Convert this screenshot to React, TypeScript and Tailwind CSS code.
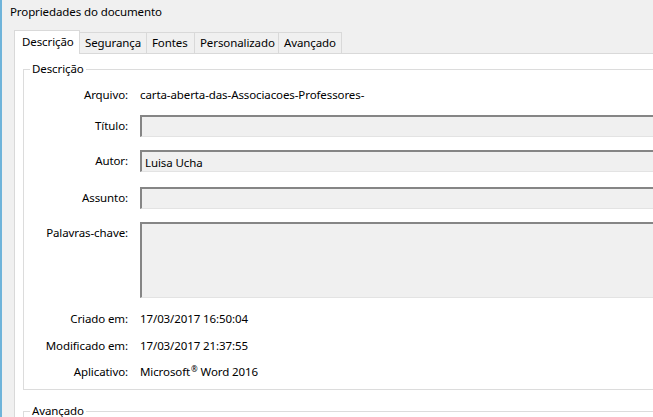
import React from 'react';

const tabs = [
  { label: 'Descrição', w: 66, active: true },
  { label: 'Segurança', w: 67 },
  { label: 'Fontes', w: 48 },
  { label: 'Personalizado', w: 84 },
  { label: 'Avançado', w: 63 },
];

const Field: React.FC<{ h: string; value?: string }> = ({ h, value }) => (
  <div className={`flex-1 ${h} bg-[#f0f0f0] border-t-2 border-l-2 border-[#858585] border-b border-b-[#e3e3e3] pl-[3px] flex items-start pt-[2px]`}>
    {value}
  </div>
);

const App: React.FC = () => {
  return (
    <div
      className="w-[653px] h-[417px] overflow-hidden bg-[#f0f0f0] border-l-2 border-[#6fb4da] text-[11.5px] tracking-[-0.1px] text-black"
      style={{ fontFamily: '"Noto Sans", "Open Sans", sans-serif' }}
    >
      <div className="h-[29px] pl-[8px] pt-[3px] leading-[18px]">Propriedades do documento</div>

      <div className="pl-[12px]">
        {/* tab strip */}
        <div className="flex items-end h-[24px]">
          {tabs.map(t =>
            t.active ? (
              <div
                key={t.label}
                style={{ width: t.w }}
                className="h-[24px] bg-white border border-b-0 border-[#d9d9d9] pl-[7px] pt-[3px] leading-[16px] relative -mb-px z-10"
              >
                {t.label}
              </div>
            ) : (
              <div
                key={t.label}
                style={{ width: t.w }}
                className="h-[21px] bg-[#f0f0f0] border border-l-0 border-b-0 border-[#d9d9d9] pl-[5px] pt-[2px] leading-[16px] whitespace-nowrap"
              >
                {t.label}
              </div>
            )
          )}
        </div>

        {/* tab page */}
        <div className="bg-white border-l border-t border-[#d9d9d9] h-[400px] pl-[8px] pt-[7px]">
          <fieldset className="border border-r-0 border-[#dcdcdc] pb-[7px]">
            <legend className="ml-[6px] px-[2px] leading-[16px]">Descrição</legend>

            <div className="flex items-center h-[20px] mt-[8px]">
              <div className="w-[104px] text-right">Arquivo:</div>
              <div className="pl-[12px]">carta-aberta-das-Associacoes-Professores-</div>
            </div>

            <div className="flex items-center mt-[10px]">
              <div className="w-[104px] text-right">Título:</div>
              <div className="flex-1 flex pl-[12px]"><Field h="h-[22px]" /></div>
            </div>

            <div className="flex items-center mt-[13px]">
              <div className="w-[104px] text-right">Autor:</div>
              <div className="flex-1 flex pl-[12px]"><Field h="h-[22px]" value="Luisa Ucha" /></div>
            </div>

            <div className="flex items-center mt-[15px]">
              <div className="w-[104px] text-right">Assunto:</div>
              <div className="flex-1 flex pl-[12px]"><Field h="h-[22px]" /></div>
            </div>

            <div className="flex items-start mt-[13px]">
              <div className="w-[104px] text-right pt-[2px]">Palavras-chave:</div>
              <div className="flex-1 flex pl-[12px]"><Field h="h-[76px]" /></div>
            </div>

            <div className="flex items-center h-[20px] mt-[11px]">
              <div className="w-[104px] text-right">Criado em:</div>
              <div className="pl-[12px]">17/03/2017 16:50:04</div>
            </div>

            <div className="flex items-center h-[20px] mt-[7px]">
              <div className="w-[104px] text-right">Modificado em:</div>
              <div className="pl-[12px]">17/03/2017 21:37:55</div>
            </div>

            <div className="flex items-center h-[20px] mt-[6px]">
              <div className="w-[104px] text-right">Aplicativo:</div>
              <div className="pl-[12px]">
                Microsoft<sup className="text-[8px] ml-px">®</sup> Word 2016
              </div>
            </div>
          </fieldset>

          <fieldset className="border border-r-0 border-[#dcdcdc] mt-[13px] h-[60px]">
            <legend className="ml-[6px] px-[2px] leading-[16px]">Avançado</legend>
          </fieldset>
        </div>
      </div>
    </div>
  );
};

export default App;
